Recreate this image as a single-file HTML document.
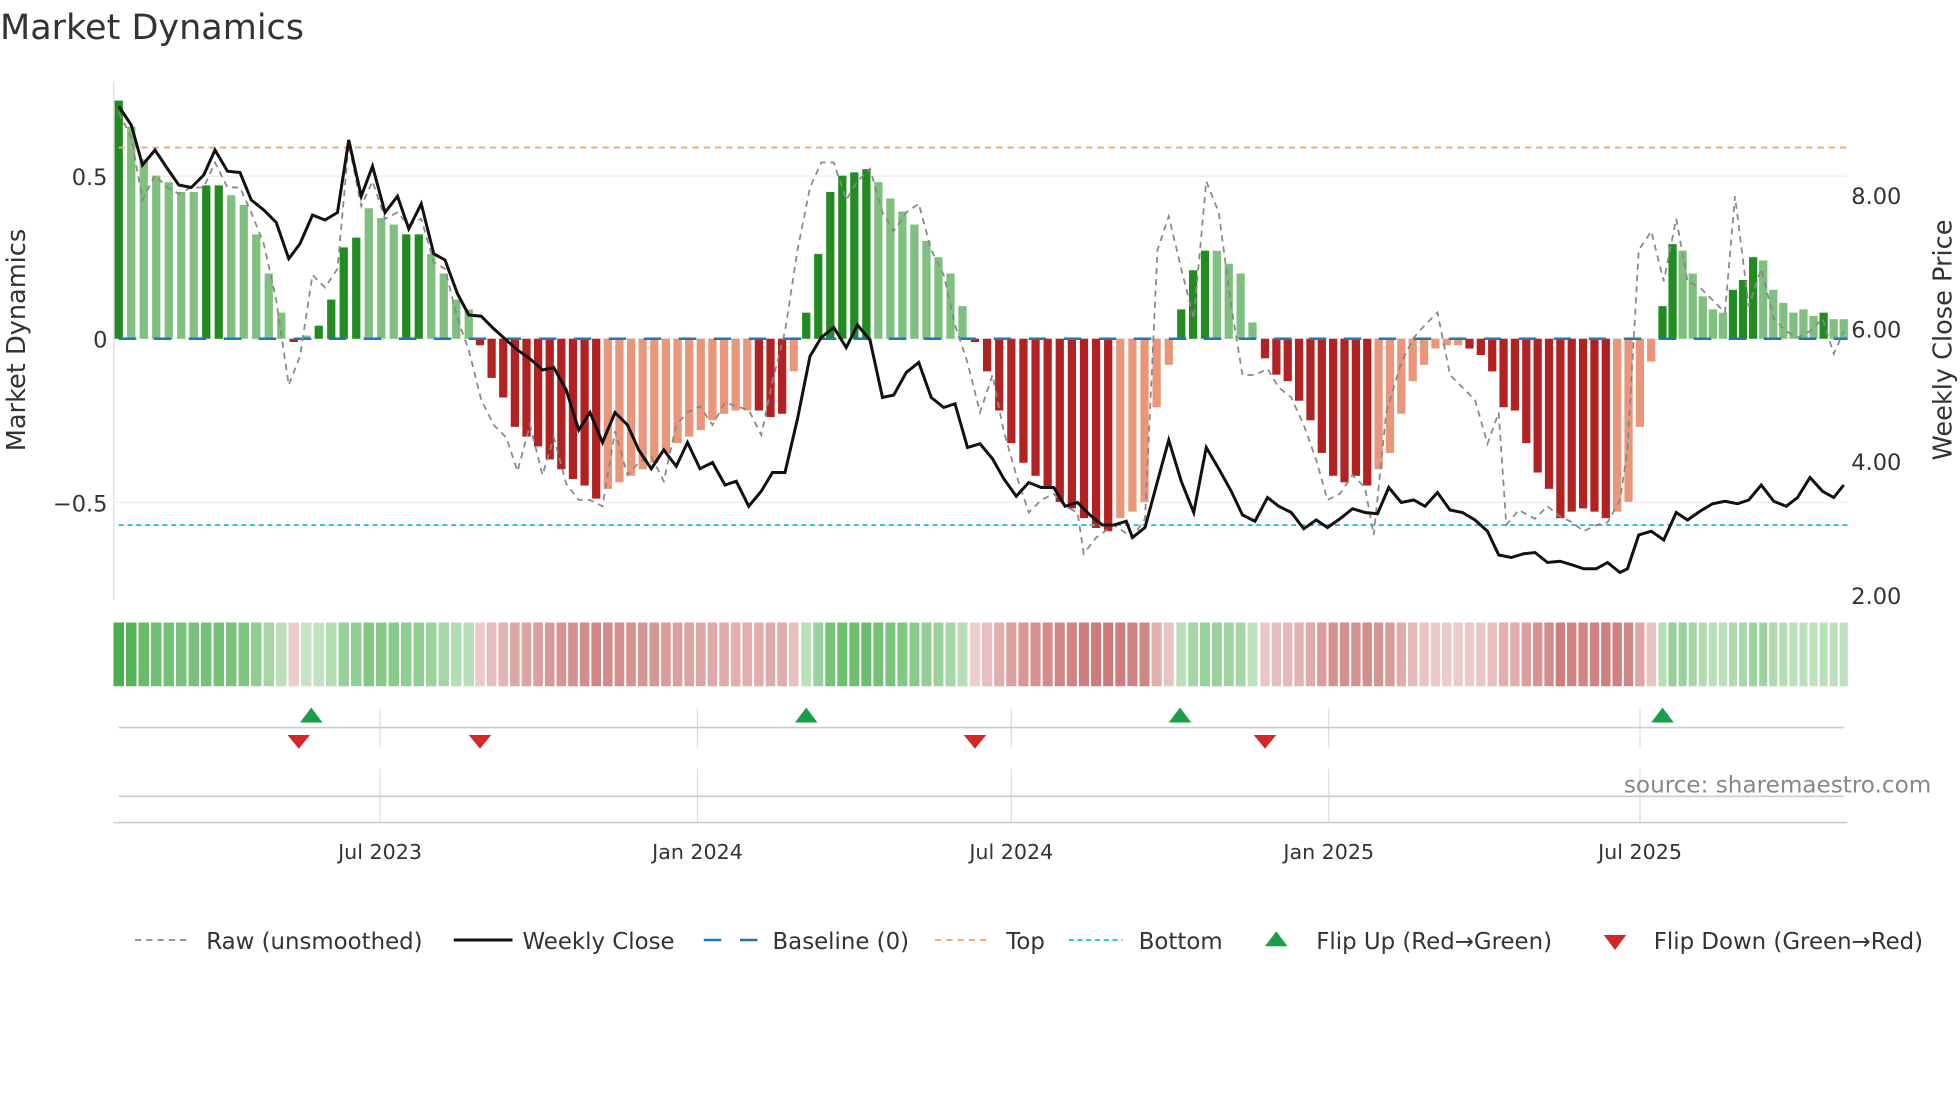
<!DOCTYPE html>
<html><head><meta charset="utf-8"><style>
html,body{margin:0;padding:0;background:#fff;width:1960px;height:1102px;overflow:hidden}
svg{display:block;font-family:"DejaVu Sans","Liberation Sans",sans-serif}
</style></head><body>
<svg id="s" width="1960" height="1102" viewBox="0 0 1568 881.6" xmlns="http://www.w3.org/2000/svg">
<rect width="1568" height="881.6" fill="#fff"/>
<text x="0" y="31" font-size="28" fill="#333">Market Dynamics</text>
<line x1="91" y1="65" x2="91" y2="480" stroke="#ddd" stroke-width="1"/>
<line x1="91" y1="141" x2="1478" y2="141" stroke="#eee"/>
<line x1="91" y1="271" x2="1478" y2="271" stroke="#eee"/>
<line x1="91" y1="402" x2="1478" y2="402" stroke="#eee"/>
<g font-size="18" fill="#333" text-anchor="end">
<text x="86" y="148">0.5</text><text x="86" y="278">0</text><text x="86" y="409">−0.5</text></g>
<g font-size="18" fill="#333">
<text x="1481" y="163">8.00</text><text x="1481" y="270">6.00</text><text x="1481" y="376">4.00</text><text x="1481" y="483">2.00</text></g>
<text transform="translate(20,272) rotate(-90)" font-size="20.5" fill="#333" text-anchor="middle">Market Dynamics</text>
<text transform="translate(1561,272) rotate(-90)" font-size="20.5" fill="#333" text-anchor="middle">Weekly Close Price</text>
<g id="bars"></g>
<line x1="95" y1="271" x2="1478" y2="271" stroke="#1f77b4" stroke-width="2" stroke-dasharray="14,14"/>
<line x1="95" y1="118" x2="1478" y2="118" stroke="#f0a868" stroke-width="1.5" stroke-dasharray="5,4"/>
<line x1="95" y1="420" x2="1478" y2="420" stroke="#22c5d6" stroke-width="1.5" stroke-dasharray="4,3"/>
<polyline id="raw" fill="none" stroke="#888" stroke-width="1.4" stroke-dasharray="5,4"/>
<polyline id="px" fill="none" stroke="#111" stroke-width="2.4"/>
<g id="strip"></g>
<g stroke="#ddd"><line x1="304" y1="567" x2="304" y2="598"/><line x1="558" y1="567" x2="558" y2="598"/><line x1="809" y1="567" x2="809" y2="598"/><line x1="1063" y1="567" x2="1063" y2="598"/><line x1="1312" y1="567" x2="1312" y2="598"/>
<line x1="304" y1="615" x2="304" y2="658"/><line x1="558" y1="615" x2="558" y2="658"/><line x1="809" y1="615" x2="809" y2="658"/><line x1="1063" y1="615" x2="1063" y2="658"/><line x1="1312" y1="615" x2="1312" y2="658"/></g>
<line x1="95" y1="582" x2="1475" y2="582" stroke="#ccc" stroke-width="1.3"/>
<line x1="95" y1="637" x2="1475" y2="637" stroke="#ccc" stroke-width="1.3"/>
<line x1="91" y1="658" x2="1478" y2="658" stroke="#ccc" stroke-width="1.3"/>
<g id="flips"></g>
<text x="1545" y="634" font-size="18.5" fill="#888" text-anchor="end">source: sharemaestro.com</text>
<g font-size="16.5" fill="#333" text-anchor="middle">
<text x="304" y="687">Jul 2023</text><text x="558" y="687">Jan 2024</text><text x="809" y="687">Jul 2024</text><text x="1063" y="687">Jan 2025</text><text x="1312" y="687">Jul 2025</text></g>
<g font-size="18.3" fill="#333">
<line x1="108" y1="752" x2="152" y2="752" stroke="#888" stroke-width="1.4" stroke-dasharray="5,4"/><text x="165" y="759">Raw (unsmoothed)</text>
<line x1="363" y1="752" x2="410" y2="752" stroke="#111" stroke-width="2.4"/><text x="418" y="759">Weekly Close</text>
<line x1="563" y1="752" x2="577" y2="752" stroke="#1f77b4" stroke-width="2"/><line x1="592" y1="752" x2="606" y2="752" stroke="#1f77b4" stroke-width="2"/><text x="618" y="759">Baseline (0)</text>
<line x1="748" y1="752" x2="792" y2="752" stroke="#f0a868" stroke-width="1.5" stroke-dasharray="5,4"/><text x="805" y="759">Top</text>
<line x1="855" y1="752" x2="898" y2="752" stroke="#22c5d6" stroke-width="1.5" stroke-dasharray="4,3"/><text x="911" y="759">Bottom</text>
<polygon points="1012,757 1030,757 1021,745" fill="#1a9e4a"/><text x="1053" y="759">Flip Up (Red→Green)</text>
<polygon points="1283,748 1301,748 1292,760" fill="#d62728"/><text x="1323" y="759">Flip Down (Green→Red)</text>
</g>
</svg>
<script>
var NS="http://www.w3.org/2000/svg";
function el(p,t,a){var e=document.createElementNS(NS,t);for(var k in a)e.setAttribute(k,a[k]);p.appendChild(e);return e;}
var S=[
[95,375,[[.73,1],[.65,0],[.55,0],[.5,0],[.48,0],[.45,0],[.45,0],[.47,1],[.47,1],[.44,0],[.41,0],[.32,0],[.2,0],[.08,0],[-.01,1],[.01,0],[.04,1],[.12,1],[.28,1],[.31,1],[.4,0],[.37,0],[.35,0],[.32,1],[.32,1],[.26,0],[.2,0],[.12,0],[.09,0]]],
[384,635,[[-.02,1],[-.12,1],[-.18,1],[-.27,1],[-.3,1],[-.33,1],[-.37,1],[-.4,1],[-.43,1],[-.45,1],[-.49,1],[-.46,0],[-.44,0],[-.42,0],[-.4,0],[-.38,0],[-.35,0],[-.32,0],[-.3,0],[-.28,0],[-.25,0],[-.23,0],[-.22,0],[-.22,0],[-.22,1],[-.24,1],[-.23,1],[-.1,0]]],
[645,770,[[.08,1],[.26,1],[.45,1],[.5,1],[.51,1],[.52,1],[.48,0],[.43,0],[.39,0],[.35,0],[.3,0],[.25,0],[.2,0],[.1,0]]],
[780,935,[[-.01,1],[-.1,1],[-.22,1],[-.32,1],[-.38,1],[-.42,1],[-.46,1],[-.5,1],[-.52,1],[-.55,1],[-.58,1],[-.59,1],[-.55,0],[-.53,0],[-.5,0],[-.21,0],[-.08,0]]],
[945,1002,[[.09,1],[.21,1],[.27,1],[.27,0],[.23,0],[.2,0],[.05,0]]],
[1012,1321,[[-.06,1],[-.11,1],[-.13,1],[-.19,1],[-.25,1],[-.35,1],[-.42,1],[-.44,1],[-.42,1],[-.45,1],[-.4,0],[-.35,0],[-.23,0],[-.13,0],[-.08,0],[-.03,0],[-.02,0],[-.02,0],[-.03,1],[-.05,1],[-.1,1],[-.21,1],[-.22,1],[-.32,1],[-.41,1],[-.46,1],[-.55,1],[-.53,1],[-.52,1],[-.53,1],[-.55,1],[-.53,0],[-.5,0],[-.27,0],[-.07,0]]],
[1330,1475,[[.1,1],[.29,1],[.27,0],[.2,0],[.13,0],[.09,0],[.08,0],[.15,1],[.18,1],[.25,1],[.24,0],[.15,0],[.11,0],[.08,0],[.09,0],[.07,0],[.08,1],[.06,0],[.06,0]]]];
var g=document.getElementById('bars'),st=document.getElementById('strip'),bw=6.6;
S.forEach(function(s){var a=s[0],b=s[1],B=s[2],m=B.length,step=(b-a)/(m-1);
B.forEach(function(it,i){var v=it[0],d=it[1],cx=a+i*step,x=cx-bw/2,y0=271,h=v*261;
var c=v>=0?(d?'#228b22':'#7fbf7f'):(d?'#b22222':'#e9967a');
el(g,'rect',{x:x,y:v>=0?y0-h:y0,width:bw,height:Math.max(Math.abs(h),1.5),fill:c});
var q=Math.min(1,Math.abs(v)/0.7),col;
if(v>=0){col='rgb('+Math.round(200-124*q)+','+Math.round(230-55*q)+','+Math.round(200-120*q)+')';}
else{col='rgb('+Math.round(238-40*q)+','+Math.round(205-100*q)+','+Math.round(205-100*q)+')';}
el(st,'rect',{x:cx-step/2+0.8,y:498,width:step-1.6,height:51,fill:col});});});
var P=[95,85,105,100,114,132,124,120,134,135,143,148,153,150,163,140,172,120,182,137,192,138,201,160,211,168,221,178,231,207,240,195,250,172,260,176,270,170,279,112,289,157,298,133,308,170,318,157,327,183,337,163,347,203,356,208,366,235,375,252,385,253,395,263,405,272,414,280,424,287,434,296,443,294,453,312,463,344,472,330,482,354,492,330,502,340,511,360,521,375,531,360,541,373,550,354,560,375,570,370,580,388,589,385,599,405,609,393,618,378,628,378,638,335,648,285,657,270,667,262,677,278,686,260,696,272,706,318,715,316,725,298,735,290,745,318,755,326,764,323,774,358,784,355,794,367,803,383,813,397,823,386,833,390,843,390,852,405,862,402,872,412,882,420,891,420,901,417,906,430,916,422,926,385,935,352,945,385,955,410,965,358,975,375,985,393,994,412,1004,417,1014,398,1023,405,1033,410,1043,423,1053,416,1062,422,1072,415,1082,407,1092,410,1102,411,1111,390,1121,402,1131,400,1140,405,1150,394,1160,408,1170,410,1180,416,1190,425,1199,444,1209,446,1219,443,1228,442,1238,450,1248,449,1258,452,1267,455,1277,455,1286,450,1296,458,1302,455,1311,428,1321,425,1331,432,1341,410,1350,416,1360,409,1370,403,1380,401,1390,403,1399,400,1409,388,1419,401,1429,405,1438,398,1448,382,1458,393,1467,398,1475,388];
var R=[95,90,105,110,114,160,124,140,134,150,143,155,153,150,163,150,172,130,182,150,192,150,201,170,211,195,221,240,231,308,240,285,250,220,260,230,270,215,279,115,289,165,298,145,308,175,318,170,327,180,337,175,347,210,356,215,366,255,375,280,385,320,395,340,405,350,414,377,424,340,434,380,443,350,453,387,463,400,472,400,482,405,492,345,502,380,511,370,521,365,531,385,541,340,550,330,560,325,570,340,580,322,589,325,599,328,609,348,618,305,628,265,638,200,648,150,657,130,667,130,677,160,686,145,696,135,706,170,715,185,725,170,735,163,745,200,755,220,764,260,774,290,784,330,794,300,803,345,813,380,823,410,833,400,843,395,852,405,862,410,867,443,877,430,891,420,906,430,916,415,926,200,935,173,945,215,955,255,965,145,975,170,985,245,994,300,1004,300,1014,295,1023,310,1033,318,1043,340,1053,368,1062,400,1072,395,1082,380,1092,390,1099,428,1109,330,1121,290,1131,270,1140,260,1150,250,1160,300,1170,310,1180,320,1190,355,1199,330,1205,420,1215,408,1228,415,1238,405,1248,413,1258,418,1267,425,1277,420,1286,418,1296,400,1302,360,1311,200,1321,185,1331,225,1341,175,1350,225,1360,230,1370,240,1380,250,1388,157,1399,245,1409,215,1419,255,1429,265,1438,270,1448,265,1458,255,1467,283,1475,265];
function pts(a){var s=[];for(var i=0;i<a.length;i+=2)s.push(a[i]+','+a[i+1]);return s.join(' ');}
document.getElementById('px').setAttribute('points',pts(P));
document.getElementById('raw').setAttribute('points',pts(R));
var f=document.getElementById('flips');
[249,645,944,1330].forEach(function(x){el(f,'polygon',{points:(x-9)+',578 '+(x+9)+',578 '+x+',566',fill:'#1a9e4a'});});
[239,384,780,1012].forEach(function(x){el(f,'polygon',{points:(x-9)+',588 '+(x+9)+',588 '+x+',599',fill:'#d62728'});});
</script>
</body></html>
